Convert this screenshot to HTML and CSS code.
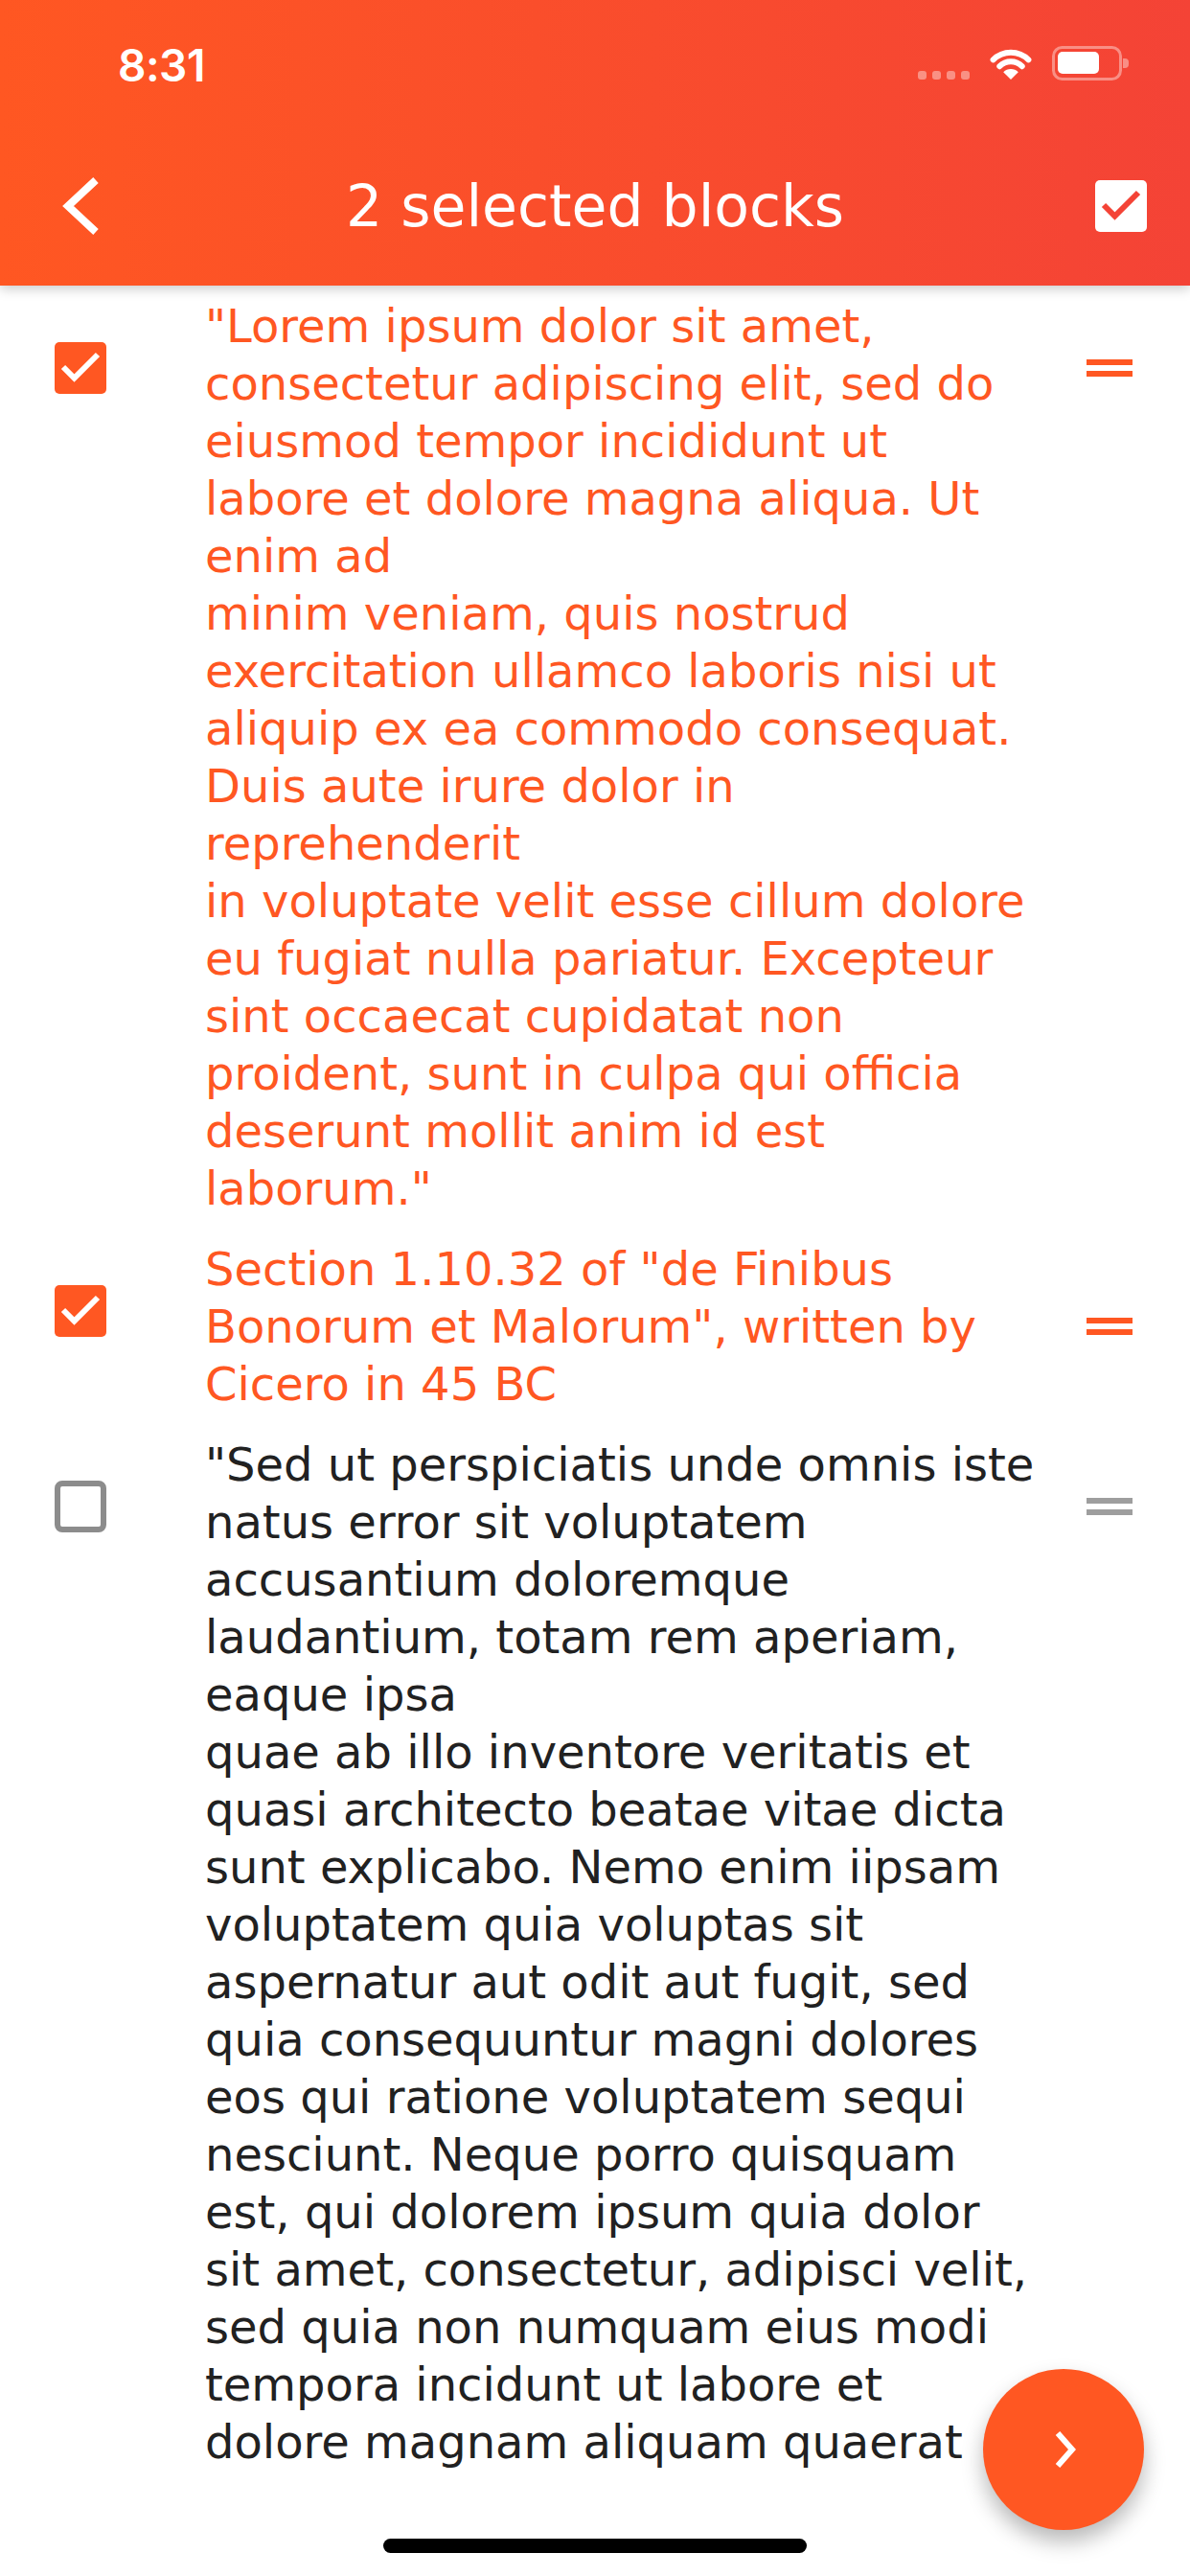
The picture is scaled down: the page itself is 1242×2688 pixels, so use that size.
FILE: index.html
```html
<!DOCTYPE html>
<html lang="en">
<head>
<meta charset="utf-8">
<title>2 selected blocks</title>
<link rel="stylesheet" href="styles.css">
</head>
<body>
<div class="app">
  <header class="appbar">
    <div class="statusbar">
      <span class="time">8:31</span>
      <svg class="status-icons" width="220" height="36" viewBox="0 0 220 36">
        <g fill="#fff" fill-opacity="0.4">
          <rect x="0" y="26" width="9" height="9" rx="3"/>
          <rect x="15" y="26" width="9" height="9" rx="3"/>
          <rect x="30" y="26" width="9" height="9" rx="3"/>
          <rect x="45" y="26" width="9" height="9" rx="3"/>
        </g>
        <g transform="translate(74 2)" fill="none" stroke="#fff" stroke-width="6" stroke-linecap="round">
          <path d="M4.6 12.4 A26 26 0 0 1 41.4 12.4"/>
          <path d="M11.3 19.2 A16.5 16.5 0 0 1 34.7 19.2"/>
          <path d="M23 33 L15.2 25.2 A11 11 0 0 1 30.8 25.2 Z" fill="#fff" stroke="none"/>
        </g>
        <rect x="141.5" y="1.5" width="70" height="33" rx="9" fill="none" stroke="#fff" stroke-opacity="0.4" stroke-width="3"/>
        <rect x="146" y="6" width="43" height="23" rx="5" fill="#fff"/>
        <path d="M214 13 h2 a4 4 0 0 1 4 4 v2 a4 4 0 0 1 -4 4 h-2 z" fill="#fff" fill-opacity="0.4"/>
      </svg>
    </div>
    <div class="navbar">
      <svg class="back" width="46" height="66" viewBox="0 0 46 66">
        <path d="M38 6 L9 33 L38 60" fill="none" stroke="#fff" stroke-width="8"/>
      </svg>
      <div class="title">2 selected blocks</div>
      <svg class="select-all" width="54" height="54" viewBox="0 0 54 54">
        <rect width="54" height="54" rx="5" fill="#fff"/>
        <path d="M9 26 L20.5 37.5 L45 13" fill="none" stroke="#F44336" stroke-width="6"/>
      </svg>
    </div>
  </header>

  <main class="list">
    <div class="row selected">
      <svg class="cb" width="54" height="54" viewBox="0 0 54 54">
        <rect width="54" height="54" rx="5" fill="#FF5722"/>
        <path d="M9 26 L20.5 37.5 L45 13" fill="none" stroke="#fff" stroke-width="6"/>
      </svg>
      <div class="text">"Lorem ipsum dolor sit amet,<br>consectetur adipiscing elit, sed do<br>eiusmod tempor incididunt ut<br>labore et dolore magna aliqua. Ut<br>enim ad<br>minim veniam, quis nostrud<br>exercitation ullamco laboris nisi ut<br>aliquip ex ea commodo consequat.<br>Duis aute irure dolor in<br>reprehenderit<br>in voluptate velit esse cillum dolore<br>eu fugiat nulla pariatur. Excepteur<br>sint occaecat cupidatat non<br>proident, sunt in culpa qui officia<br>deserunt mollit anim id est<br>laborum."</div>
      <div class="handle"><span></span><span></span></div>
    </div>

    <div class="row selected short">
      <svg class="cb" width="54" height="54" viewBox="0 0 54 54">
        <rect width="54" height="54" rx="5" fill="#FF5722"/>
        <path d="M9 26 L20.5 37.5 L45 13" fill="none" stroke="#fff" stroke-width="6"/>
      </svg>
      <div class="text">Section 1.10.32 of "de Finibus<br>Bonorum et Malorum", written by<br>Cicero in 45 BC</div>
      <div class="handle"><span></span><span></span></div>
    </div>

    <div class="row">
      <svg class="cb" width="54" height="54" viewBox="0 0 54 54">
        <rect x="3" y="3" width="48" height="48" rx="5" fill="none" stroke="#8C8C8C" stroke-width="6"/>
      </svg>
      <div class="text">"Sed ut perspiciatis unde omnis iste<br>natus error sit voluptatem<br>accusantium doloremque<br>laudantium, totam rem aperiam,<br>eaque ipsa<br>quae ab illo inventore veritatis et<br>quasi architecto beatae vitae dicta<br>sunt explicabo. Nemo enim iipsam<br>voluptatem quia voluptas sit<br>aspernatur aut odit aut fugit, sed<br>quia consequuntur magni dolores<br>eos qui ratione voluptatem sequi<br>nesciunt. Neque porro quisquam<br>est, qui dolorem ipsum quia dolor<br>sit amet, consectetur, adipisci velit,<br>sed quia non numquam eius modi<br>tempora incidunt ut labore et<br>dolore magnam aliquam quaerat</div>
      <div class="handle"><span></span><span></span></div>
    </div>
  </main>

  <div class="home-area"><div class="home-indicator"></div></div>

  <button class="fab" type="button" aria-label="Next">
    <svg width="26" height="40" viewBox="0 0 26 40">
      <path d="M5 3 L20 20 L5 37" fill="none" stroke="#fff" stroke-width="6"/>
    </svg>
  </button>
</div>
</body>
</html>
```
FILE: styles.css
```css
* { box-sizing: border-box; }
html, body { margin: 0; padding: 0; }
body {
  width: 1242px;
  height: 2688px;
  overflow: hidden;
  background: #fff;
  font-family: "DejaVu Sans", "Noto Sans", sans-serif;
}
.app {
  position: relative;
  display: flex;
  flex-direction: column;
  height: 2688px;
}
.appbar {
  flex: 0 0 298px;
  display: flex;
  flex-direction: column;
  background: linear-gradient(90deg, #FF5722 0%, #F44336 100%);
  box-shadow: 0 3px 12px rgba(0, 0, 0, 0.22);
  position: relative;
  z-index: 2;
  color: #fff;
}
.statusbar {
  height: 132px;
  display: flex;
  align-items: center;
  justify-content: space-between;
  padding: 0 22px 0 123px;
}
.time {
  font-family: Inter, "Liberation Sans", sans-serif;
  font-weight: 600;
  font-size: 46px;
  letter-spacing: -0.5px;
  padding-top: 4px;
}
.status-icons { display: block; margin-right: 42px; }
.navbar {
  height: 166px;
  display: grid;
  grid-template-columns: 1fr auto 1fr;
  align-items: center;
}
.back { display: block; justify-self: start; margin-left: 62px; }
.title {
  font-size: 60px;
  line-height: 66px;
  color: #fff;
}
.select-all { display: block; justify-self: end; margin-right: 45px; }

.list {
  flex: 1;
  overflow: hidden;
}
.row {
  display: flex;
  align-items: flex-start;
  padding: 12px 0;
}
.cb {
  display: block;
  flex: 0 0 54px;
  margin: 47px 0 0 57px;
}
.text {
  flex: 1;
  min-width: 0;
  margin-left: 103px;
  font-size: 48px;
  line-height: 60px;
  white-space: nowrap;
  color: #212121;
}
.row.selected .text { color: #FF5722; }
.handle {
  flex: 0 0 48px;
  margin: 65px 60px 0 0;
  display: flex;
  flex-direction: column;
  gap: 6px;
}
.handle span { display: block; height: 6px; background: #9E9E9E; }
.row.selected .handle span { background: #FF5722; }
.row.short .handle { align-self: center; margin-top: 0; }

.home-area {
  flex: 0 0 102px;
  display: flex;
  justify-content: center;
  padding-top: 63px;
}
.home-indicator {
  width: 442px;
  height: 15px;
  border-radius: 8px;
  background: #000;
}
.fab {
  position: absolute;
  left: 1026px;
  top: 2472px;
  width: 168px;
  height: 168px;
  border: 0;
  border-radius: 50%;
  background: #FF5722;
  box-shadow: 0 12px 22px rgba(0, 0, 0, 0.28);
  display: flex;
  align-items: center;
  justify-content: center;
  padding: 0 0 0 4px;
}
.fab svg { display: block; }
```
